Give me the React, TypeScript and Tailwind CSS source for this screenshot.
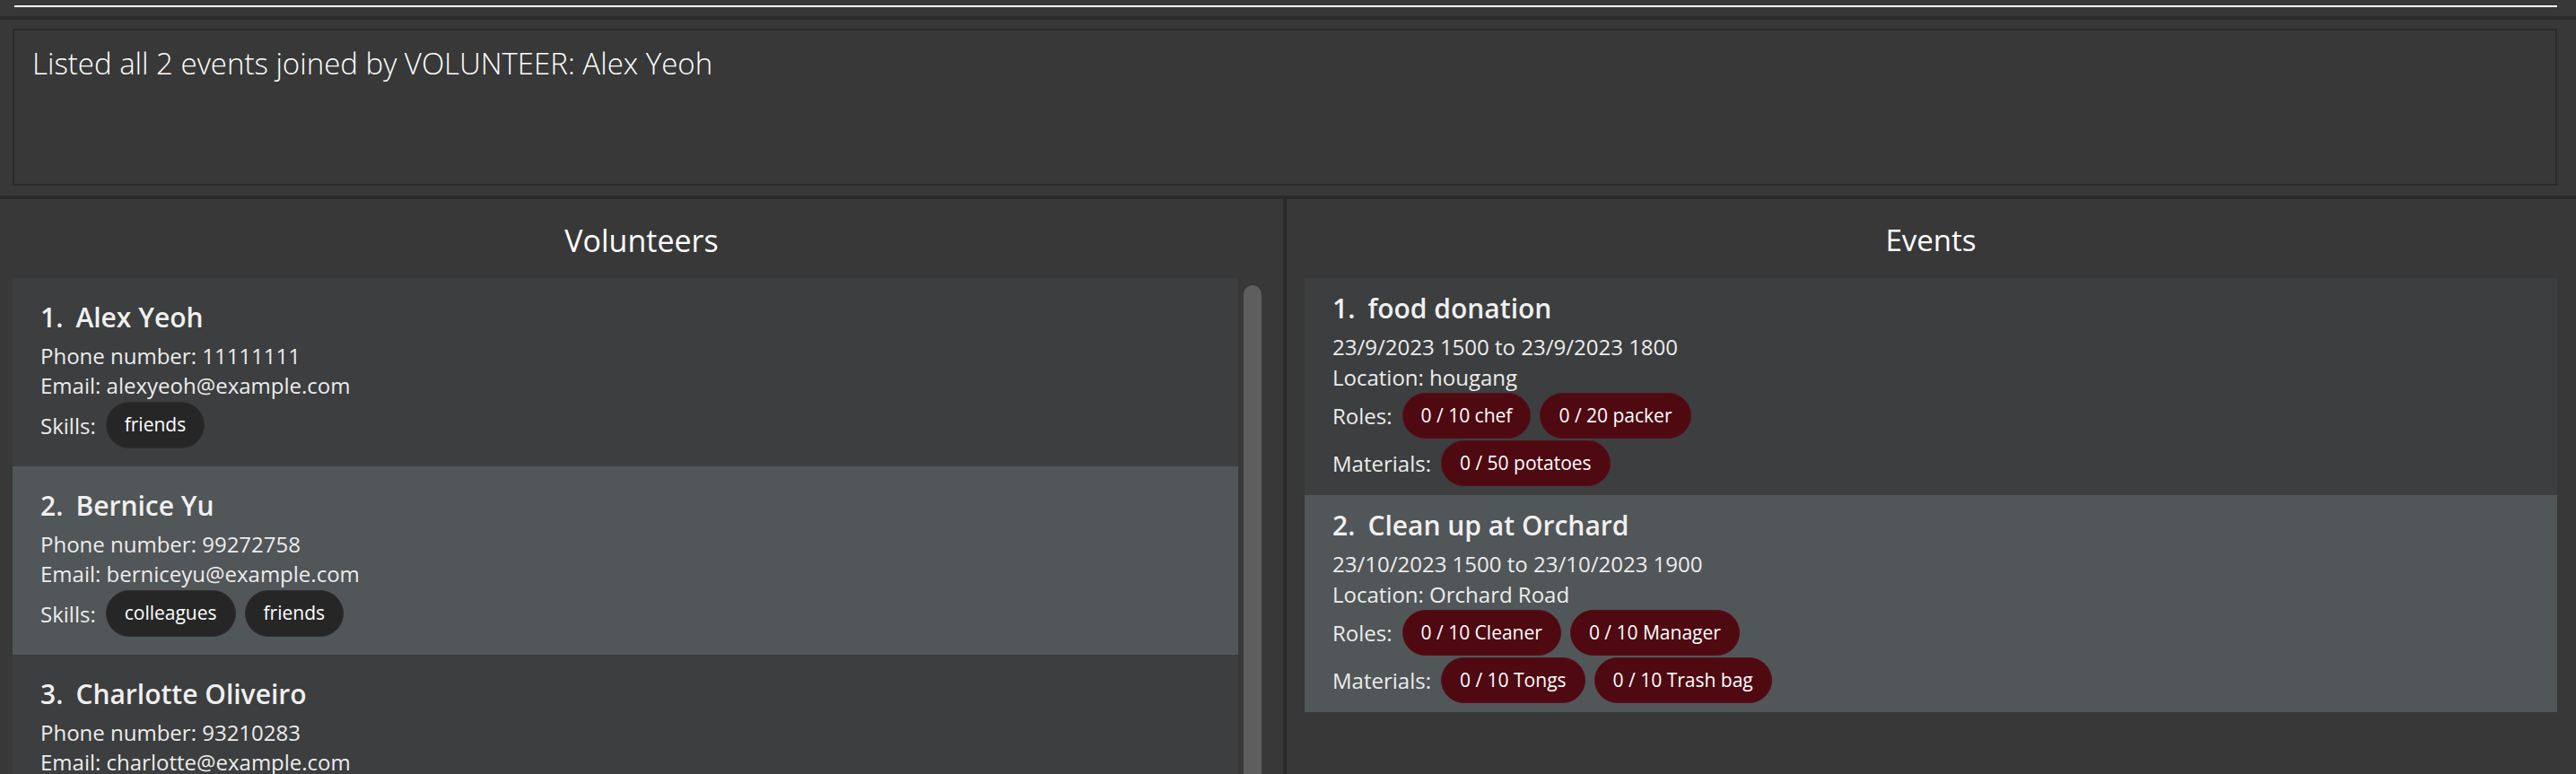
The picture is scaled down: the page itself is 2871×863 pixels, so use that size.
import React from "react";

type Volunteer = { name: string; phone: string; email: string; skills: string[] };
type EventItem = { name: string; time: string; location: string; roles: string[]; materials: string[] };

const volunteers: Volunteer[] = [
  { name: "Alex Yeoh", phone: "11111111", email: "alexyeoh@example.com", skills: ["friends"] },
  { name: "Bernice Yu", phone: "99272758", email: "berniceyu@example.com", skills: ["colleagues", "friends"] },
  { name: "Charlotte Oliveiro", phone: "93210283", email: "charlotte@example.com", skills: ["neighbours"] },
];

const events: EventItem[] = [
  {
    name: "food donation",
    time: "23/9/2023 1500 to 23/9/2023 1800",
    location: "hougang",
    roles: ["0 / 10 chef", "0 / 20 packer"],
    materials: ["0 / 50 potatoes"],
  },
  {
    name: "Clean up at Orchard",
    time: "23/10/2023 1500 to 23/10/2023 1900",
    location: "Orchard Road",
    roles: ["0 / 10 Cleaner", "0 / 10 Manager"],
    materials: ["0 / 10 Tongs", "0 / 10 Trash bag"],
  },
];

function SkillPill({ text }: { text: string }) {
  return (
    <div className="h-[52px] px-[20px] rounded-full bg-[#262626] border border-[#2e2e2e] flex items-center text-[21px] text-white">
      {text}
    </div>
  );
}

function RedPill({ text }: { text: string }) {
  return (
    <div className="h-[51px] px-[20px] rounded-full bg-[#4f0911] border border-[#55101a] flex items-center text-[21px] text-white">
      {text}
    </div>
  );
}

function VolunteerCard({ v, i }: { v: Volunteer; i: number }) {
  const bg = i % 2 === 0 ? "bg-[#3c3e3f]" : "bg-[#515658]";
  return (
    <div className={`${bg} h-[210px] shrink-0 pt-[24px] pl-[31px] pr-[20px]`}>
      <div className="text-[30px] leading-[40px] font-semibold text-[#f0f0f0] flex">
        <span>{i + 1}.</span>
        <span className="ml-[14px]">{v.name}</span>
      </div>
      <div className="mt-[6px] text-[24px] leading-[33px] text-[#ececec]">Phone number: {v.phone}</div>
      <div className="text-[24px] leading-[33px] text-[#ececec]">Email: {v.email}</div>
      <div className="mt-[2px] flex items-center gap-[10px]">
        <span className="text-[24px] leading-[33px] text-[#ececec] mr-[1px]">Skills:</span>
        {v.skills.map((s) => (
          <SkillPill key={s} text={s} />
        ))}
      </div>
    </div>
  );
}

function EventCard({ e, i }: { e: EventItem; i: number }) {
  const bg = i % 2 === 0 ? "bg-[#3c3e3f]" : "bg-[#515658]";
  return (
    <div className={`${bg} h-[242px] pt-[14px] pl-[31px] pr-[20px]`}>
      <div className="text-[30px] leading-[40px] font-semibold text-[#f0f0f0] flex">
        <span>{i + 1}.</span>
        <span className="ml-[14px]">{e.name}</span>
      </div>
      <div className="mt-[6px] text-[24px] leading-[34px] text-[#ececec]">{e.time}</div>
      <div className="text-[24px] leading-[34px] text-[#ececec]">Location: {e.location}</div>
      <div className="flex items-center gap-[10px]">
        <span className="text-[24px] leading-[34px] text-[#ececec] mr-[1px]">Roles:</span>
        {e.roles.map((r) => (
          <RedPill key={r} text={r} />
        ))}
      </div>
      <div className="mt-[2px] flex items-center gap-[10px]">
        <span className="text-[24px] leading-[34px] text-[#ececec] mr-[1px]">Materials:</span>
        {e.materials.map((m) => (
          <RedPill key={m} text={m} />
        ))}
      </div>
    </div>
  );
}

export default function App() {
  return (
    <div className="w-[2871px] h-[863px] overflow-hidden bg-[#383838] font-['Open_Sans','Noto_Sans',sans-serif] flex flex-col">
      {/* command box remnant */}
      <div className="h-[18px] shrink-0 pt-[6px] pl-[16px] pr-[21px]">
        <div className="h-[2px] bg-white" />
      </div>
      <div className="h-[4px] shrink-0 bg-[#2a2a2a]" />
      {/* result display */}
      <div className="h-[196px] shrink-0 pt-[10px] pb-[11px] pl-[14px] pr-[21px]">
        <div className="h-full border-2 border-[#2b2b2b] bg-[#383838] pt-[16px] pl-[20px]">
          <div className="text-[33px] leading-[42px] font-light text-white">
            Listed all 2 events joined by VOLUNTEER: Alex Yeoh
          </div>
        </div>
      </div>
      <div className="h-[4px] shrink-0 bg-[#2a2a2a]" />
      {/* panels */}
      <div className="flex-1 flex min-h-0">
        {/* volunteers */}
        <div className="w-[1430px] shrink-0 flex flex-col min-h-0">
          <div className="h-[88px] shrink-0 flex items-center justify-center pt-[4px] text-[34px] leading-[40px] text-white">
            Volunteers
          </div>
          <div className="flex-1 flex min-h-0 pl-[14px]">
            <div className="w-[1366px] flex flex-col overflow-hidden">
              {volunteers.map((v, i) => (
                <VolunteerCard key={v.name} v={v} i={i} />
              ))}
            </div>
            <div className="ml-[6px] w-[20px] pt-[8px]">
              <div className="h-full rounded-t-[10px] bg-[#5e5e5e]" />
            </div>
          </div>
        </div>
        <div className="w-[4px] shrink-0 bg-[#2a2a2a]" />
        {/* events */}
        <div className="flex-1 flex flex-col min-h-0 pl-[20px] pr-[21px]">
          <div className="h-[88px] shrink-0 flex items-center justify-center pt-[4px] text-[33px] leading-[40px] text-white">
            Events
          </div>
          <div className="flex flex-col">
            {events.map((e, i) => (
              <EventCard key={e.name} e={e} i={i} />
            ))}
          </div>
        </div>
      </div>
    </div>
  );
}
